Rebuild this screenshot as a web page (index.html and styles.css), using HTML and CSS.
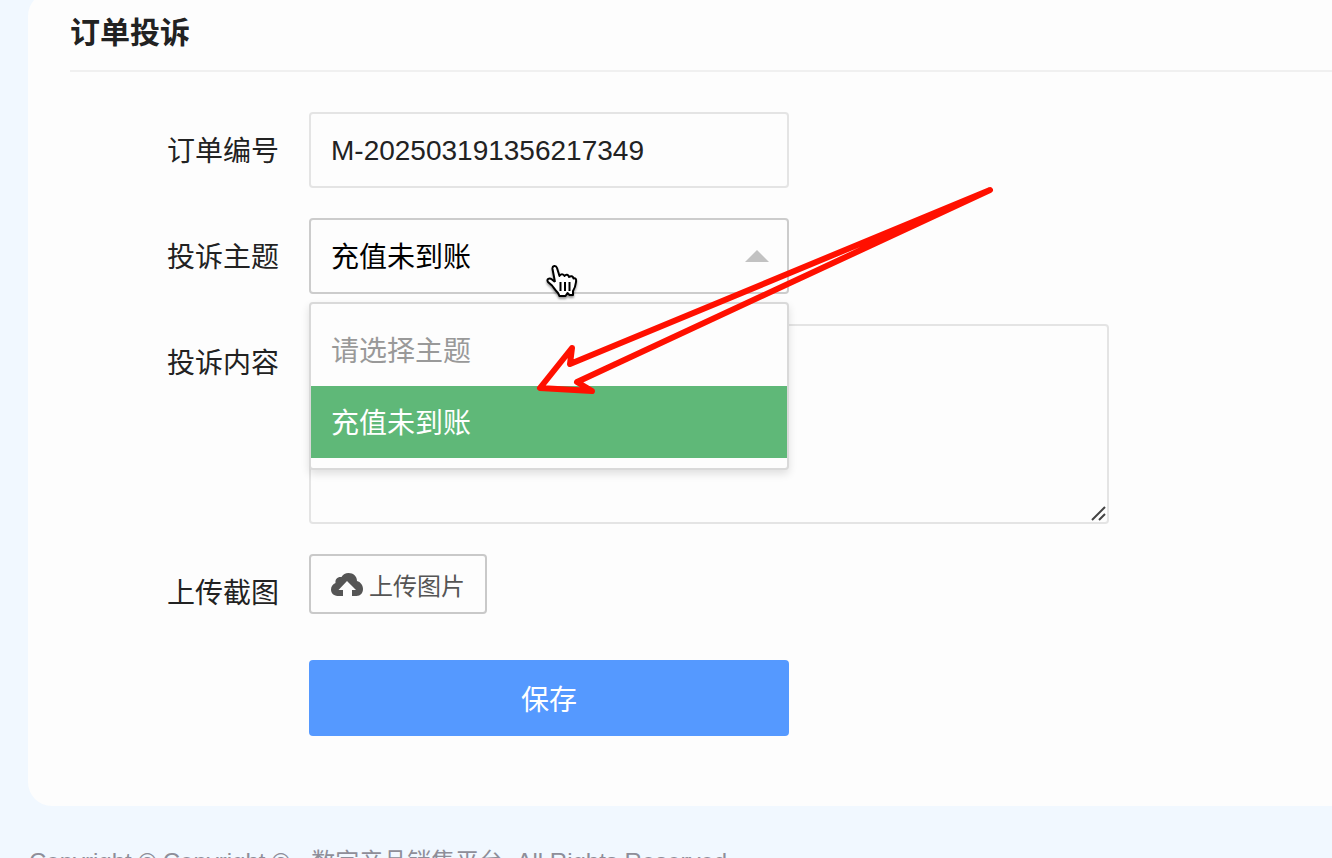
FILE: index.html
```html
<!DOCTYPE html>
<html lang="zh-CN">
<head>
  <meta charset="UTF-8">
  <meta name="viewport" content="width=device-width, initial-scale=1.0">
  <title>订单投诉</title>
  <link rel="stylesheet" href="styles.css">
</head>
<body>
  <main class="card">
    <h1 class="card-title">订单投诉</h1>
    <form class="form">
      <div class="form-item">
        <label class="form-label" for="orderNo">订单编号</label>
        <div class="form-block">
          <input class="control" type="text" id="orderNo" value="M-202503191356217349">
        </div>
      </div>

      <div class="form-item">
        <label class="form-label" for="subject">投诉主题</label>
        <div class="form-block select-box">
          <select class="control select" id="subject">
            <option>请选择主题</option>
            <option selected>充值未到账</option>
          </select>
          <ul class="options" role="listbox" aria-label="投诉主题">
            <li class="option option-tip" role="option">请选择主题</li>
            <li class="option option-active" role="option" aria-selected="true">充值未到账</li>
          </ul>
        </div>
      </div>

      <div class="form-item">
        <label class="form-label" for="content">投诉内容</label>
        <div class="form-block textarea-box">
          <textarea class="control textarea" id="content"></textarea>
          <svg class="grip" viewBox="0 0 16 16" aria-hidden="true">
            <path d="M1 14L14 1M8 14L14 8"/>
          </svg>
        </div>
      </div>

      <div class="form-item">
        <label class="form-label" for="upload">上传截图</label>
        <div class="form-block">
          <button class="upload" type="button" id="upload">
            <svg class="upload-icon" viewBox="0 0 32 28" aria-hidden="true">
              <path d="M12 26H6.500C2.500 25.500 0 23 0 19.500C0 16.500 2 14 4.500 13C4 9 6.500 6.500 10.500 7C12 4.500 14.500 3 17.500 3C22.500 3 26 6.500 26 11C29.500 12 32 15 32 19C32 23 29.500 26 25.500 26H21V20H25L16 11L7.500 20H12Z"/>
            </svg>
            <span>上传图片</span>
          </button>
        </div>
      </div>

      <div class="form-item">
        <div class="form-block form-action">
          <button class="submit" type="submit">保存</button>
        </div>
      </div>
    </form>
  </main>

  <footer class="footer">Copyright © Copyright © - 数字产品销售平台. All Rights Reserved.</footer>

  <svg class="arrow" viewBox="0 0 460 210" aria-hidden="true">
    <path d="M455 5L35 179L37 163L5 203L57 206L42 197Z"/>
  </svg>

  <svg class="pointer" viewBox="0 0 32 34" aria-hidden="true">
    <path class="pointer-hand" d="M9 18L6.500 5C6 1.500 10 1 11 4L13.500 12C14.500 9.500 17.500 9.500 18.500 12C20 10 22.500 10.500 23 13C25 11.500 27 12 27.500 14.500C29.500 14 30.500 15 30 18C29.500 22 29 24 27 27L27 31L23.500 31L21.500 29L19.500 32H13.500L12 29C9 26 8 24 6 21.500L2 18C0 15 3.500 13.500 6 15.500L9 18"/>
    <path class="pointer-line" d="M14.500 18V27M19 18V27M23.500 18V27"/>
  </svg>
</body>
</html>
```

FILE: styles.css
```css
* {
  box-sizing: border-box;
}
body {
  margin: 0;
  height: 100vh;
  overflow: hidden;
  background: #f1f8ff;
  color: #222;
  font-family: "Liberation Sans", "Noto Sans CJK SC", sans-serif;
  font-size: 28px;
}
button, input, select, textarea {
  font-family: inherit;
  font-size: inherit;
  color: inherit;
}
.card {
  margin: -8px 0 0 28px;
  padding: 8px 0 70px 42px;
  background: #fdfdfd;
  border-radius: 24px 0 0 24px;
}
.card-title {
  margin: 0 0 40px;
  padding: 12px 0 16px;
  border-bottom: 2px solid #f0f0f0;
  font-size: 30px;
  font-weight: 700;
  line-height: 42px;
}
.form {
  display: flex;
  flex-direction: column;
  gap: 30px;
}
.form-item {
  display: grid;
  grid-template-columns: 209px 1fr;
  column-gap: 30px;
  min-height: 76px;
}
.form-label {
  padding-top: 4px;
  line-height: 72px;
  text-align: right;
}
.form-block {
  max-width: 480px;
}
.form-action {
  grid-column: 2;
}
.control {
  display: block;
  width: 100%;
  height: 76px;
  padding: 2px 20px 0;
  background: #fdfdfd;
  border: 2px solid #e4e4e4;
  border-radius: 4px;
  outline: none;
}

/* select with its open list */
.select-box {
  position: relative;
}
.select-box::after {
  content: "";
  position: absolute;
  top: 32px;
  right: 20px;
  border: 12px solid transparent;
  border-top: 0;
  border-bottom: 12px solid #c2c2c2;
}
.select {
  appearance: none;
  border-color: #ccc;
  color: #000;
}
.options {
  position: absolute;
  z-index: 2;
  top: 84px;
  left: 0;
  width: 100%;
  margin: 0;
  padding: 10px 0;
  list-style: none;
  background: #fdfdfd;
  border: 2px solid #d9d9d9;
  border-radius: 4px;
  box-shadow: 0 4px 8px rgba(0, 0, 0, 0.12);
}
.option {
  padding: 4px 20px 0;
  line-height: 68px;
}
.option-tip {
  color: #999;
}
.option-active {
  background: #5fb878;
  color: #fff;
}

.textarea-box {
  position: relative;
  max-width: 800px;
}
.textarea {
  height: 200px;
  padding: 12px 20px;
  resize: none;
}
.grip {
  position: absolute;
  right: 2px;
  bottom: 2px;
  width: 16px;
  height: 16px;
  fill: none;
  stroke: #444;
  stroke-width: 2;
}

.upload {
  display: flex;
  align-items: center;
  gap: 6px;
  height: 60px;
  padding: 0 20px;
  background: #fdfdfd;
  border: 2px solid #c9c9c9;
  border-radius: 4px;
  color: #555;
  font-size: 24px;
  cursor: pointer;
}
.upload-icon {
  width: 32px;
  height: 28px;
  fill: #555;
}
.submit {
  display: block;
  width: 100%;
  height: 76px;
  border: 0;
  border-radius: 4px;
  background: #5599ff;
  color: #fff;
  cursor: pointer;
}

.footer {
  margin-top: 38px;
  padding-left: 29px;
  color: #8e8e99;
  font-size: 24px;
  line-height: 36px;
}

/* drawn over the page */
.arrow {
  position: absolute;
  z-index: 3;
  top: 185px;
  left: 535px;
  width: 460px;
  height: 210px;
  fill: none;
  stroke: #ff1000;
  stroke-width: 6;
  stroke-linecap: round;
  stroke-linejoin: round;
  pointer-events: none;
}
.pointer {
  position: absolute;
  z-index: 3;
  top: 264px;
  left: 546px;
  width: 32px;
  height: 34px;
  overflow: visible;
  filter: drop-shadow(0 2px 1px rgba(0, 0, 0, 0.4));
  pointer-events: none;
}
.pointer-hand {
  fill: #fff;
  stroke: #000;
  stroke-width: 2;
  stroke-linejoin: round;
}
.pointer-line {
  fill: none;
  stroke: #000;
  stroke-width: 2;
}
```
